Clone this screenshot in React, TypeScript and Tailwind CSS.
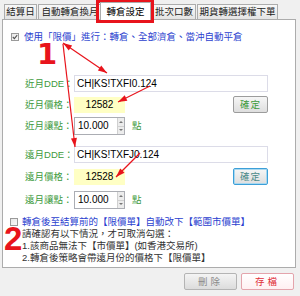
import React from "react";

// 轉倉設定 panel with red annotation marks

type Pt = [number, number];

function Arrow({ from, to, head = true, tail = false }: { from: Pt; to: Pt; head?: boolean; tail?: boolean }) {
  const tip = (a: Pt, b: Pt) => {
    const dx = b[0] - a[0];
    const dy = b[1] - a[1];
    const len = Math.hypot(dx, dy);
    const ux = dx / len;
    const uy = dy / len;
    const l = 9;
    const w = 3;
    const bx = b[0] - ux * l;
    const by = b[1] - uy * l;
    return `${b[0]},${b[1]} ${bx - uy * w},${by + ux * w} ${bx + uy * w},${by - ux * w}`;
  };
  return (
    <g>
      <line x1={from[0]} y1={from[1]} x2={to[0]} y2={to[1]} stroke="#e8141c" strokeWidth={1.2} />
      {head && <polygon points={tip(from, to)} fill="#e8141c" />}
      {tail && <polygon points={tip(to, from)} fill="#e8141c" />}
    </g>
  );
}

function Check({ checked }: { checked?: boolean }) {
  return (
    <div className="flex h-[8px] w-[8px] items-center justify-center border border-[#9a9a9a] bg-gradient-to-br from-[#e8e8e8] to-[#fafafa]">
      {checked && (
        <svg width="6" height="6" viewBox="0 0 6 6">
          <path d="M0.8 3 L2.4 4.6 L5.2 1.2" fill="none" stroke="#555" strokeWidth="1.1" />
        </svg>
      )}
    </div>
  );
}

function Spin({ value }: { value: string }) {
  return (
    <div className="flex h-[18px] w-[51px] items-center border border-[#abadb3] bg-white">
      <span className="flex-1 pl-[3px] font-['Liberation_Sans',sans-serif] text-[10px] text-black">{value}</span>
      <div className="flex h-full w-[7px] flex-col border-l border-[#d0d0d0]">
        <div className="flex flex-1 items-center justify-center bg-[#ececec]">
          <div className="h-0 w-0 border-x-[2px] border-b-[2px] border-x-transparent border-b-[#777]" />
        </div>
        <div className="flex flex-1 items-center justify-center border-t border-[#d0d0d0] bg-[#ececec]">
          <div className="h-0 w-0 border-x-[2px] border-t-[2px] border-x-transparent border-t-[#777]" />
        </div>
      </div>
    </div>
  );
}

function MonthBlock({
  prefix,
  dde,
  price,
  focused,
  className,
}: {
  prefix: string;
  dde: string;
  price: string;
  focused?: boolean;
  className?: string;
}) {
  return (
    <div className={className}>
      {/* DDE */}
      <div className="flex h-[17px] items-center pl-[22px]">
        <span className="w-[49px] text-[#3d9a3d]">{prefix}DDE：</span>
        <div className="flex h-[17px] w-[194px] items-center border border-[#dcdce8] bg-white pl-[2px] font-['Liberation_Sans',sans-serif] text-[10px] text-black">
          {dde}
        </div>
      </div>
      {/* 價格 */}
      <div className={"flex h-[17px] items-center pl-[22px] " + (focused ? "mt-[5px]" : "mt-[4px]")}>
        <span className="w-[49px] text-[#3d9a3d]">{prefix}價格：</span>
        <div className="flex w-[194px] items-center">
          <div className="flex h-[16px] w-[51px] items-center justify-center bg-[#ffffc4] font-['Liberation_Sans',sans-serif] text-[10px] text-black">
            {price}
          </div>
          <button
            className={
              "ml-auto flex h-[17px] w-[35px] items-center justify-center rounded-[2px] border bg-gradient-to-b from-[#f6f6f6] to-[#dedede] tracking-[1px] " +
              (focused
                ? "border-[#3c9fd8] text-[#4c8a8a] shadow-[inset_0_0_0_1px_#a8d8f0]"
                : "border-[#9c9c9c] text-[#3d9a3d]")
            }
          >
            確定
          </button>
        </div>
      </div>
      {/* 讓點 */}
      <div className={"flex h-[18px] items-center pl-[22px] " + (focused ? "mt-[6px]" : "mt-[4px]")}>
        <span className="w-[49px] text-[#3d9a3d]">{prefix}讓點：</span>
        <Spin value="10.000" />
        <span className="ml-[7px] text-[#3d9a3d]">點</span>
      </div>
    </div>
  );
}

export default function App() {
  return (
    <div className="relative h-[296px] w-[300px] overflow-hidden bg-[#f0f0f0] font-['Liberation_Sans','Noto_Sans_CJK_TC',sans-serif] text-[9.5px] leading-none">
      {/* TABS */}
      <div className="flex h-[19px] items-end pl-[4px] text-[#222]">
        <div className="flex h-[15px] w-[33px] items-center justify-center border border-b-0 border-[#acacac] bg-gradient-to-b from-[#f8f8f8] to-[#e4e4e4]">
          結算日
        </div>
        <div className="ml-[1px] flex h-[15px] w-[64px] items-center justify-center border border-b-0 border-[#acacac] bg-gradient-to-b from-[#f8f8f8] to-[#e4e4e4]">
          自動轉倉換月
        </div>
        <div className="relative z-10 mb-[-1px] ml-[-2px] flex h-[18px] w-[51px] items-center justify-center border border-b-0 border-[#acacac] bg-white text-black">
          轉倉設定
        </div>
        <div className="ml-[1px] flex h-[15px] w-[44px] items-center justify-center border border-b-0 border-[#acacac] bg-gradient-to-b from-[#f8f8f8] to-[#e4e4e4]">
          批次口數
        </div>
        <div className="ml-[1px] flex h-[15px] w-[81px] items-center justify-center border border-b-0 border-[#acacac] bg-gradient-to-b from-[#f8f8f8] to-[#e4e4e4]">
          期貨轉選擇權下單
        </div>
      </div>

      {/* PANEL */}
      <div className="ml-[2px] flex h-[249px] w-[294px] flex-col border border-[#acacac] bg-white">
        <div className="mt-[11px] flex h-[12px] items-center pl-[8px]">
          <Check checked />
          <span className="ml-[5px] text-[#2b3fcf]">使用「限價」進行：轉倉、全部濟倉、當沖自動平倉</span>
        </div>

        <MonthBlock prefix="近月" dde="CH|KS!TXFI0.124" price="12582" className="mt-[32px]" />
        <MonthBlock prefix="遠月" dde="CH|KS!TXFJ0.124" price="12528" focused className="mt-[11px]" />

        <div className="mt-[7px] flex h-[12px] items-center pl-[7px]">
          <Check />
          <span className="ml-[4px] text-[#2b3fcf]">轉倉後至結算前的【限價單】自動改下【範圍市價單】</span>
        </div>
        <div className="pl-[19px] text-[#333]">
          <div className="flex h-[12px] items-center">請確認有以下情況，才可取消勾選：</div>
          <div className="flex h-[12px] items-center">1.該商品無法下【市價單】(如香港交易所)</div>
          <div className="flex h-[11px] items-center">2.轉倉後策略會帶遠月份的價格下【限價單】</div>
        </div>
      </div>

      {/* BOTTOM BUTTONS */}
      <div className="mt-[5px] flex justify-end gap-[4px] pr-[6px]">
        <button className="flex h-[17px] w-[53px] items-center justify-center rounded-[2px] border border-[#b4b4b4] bg-gradient-to-b from-[#f4f4f4] to-[#dcdcdc] tracking-[3px] text-[#8a8a8a]">
          刪除
        </button>
        <button className="flex h-[17px] w-[53px] items-center justify-center rounded-[2px] border border-[#e4a4ac] bg-gradient-to-b from-[#ffffff] to-[#fff0f2] tracking-[3px] text-[#e0303a]">
          存檔
        </button>
      </div>

      {/* ANNOTATIONS */}
      <div className="pointer-events-none absolute left-[96px] top-0 h-[23px] w-[58px] border-[3px] border-[#e8141c]" />
      <div className="pointer-events-none absolute left-[37px] top-[40px] font-['DejaVu_Sans',sans-serif] text-[29px] font-bold leading-none text-[#e8141c]">
        1
      </div>
      <div className="pointer-events-none absolute left-[4px] top-[222px] font-['Liberation_Sans',sans-serif] text-[33px] font-bold leading-none text-[#e8141c]">
        2
      </div>
      <svg className="pointer-events-none absolute left-0 top-0" width="300" height="296">
        <Arrow from={[107, 73]} to={[63, 43]} tail />
        <Arrow from={[63, 44]} to={[75, 147]} />
        <Arrow from={[150, 86]} to={[118, 102]} />
        <Arrow from={[140, 153]} to={[116, 177]} />
      </svg>
    </div>
  );
}
